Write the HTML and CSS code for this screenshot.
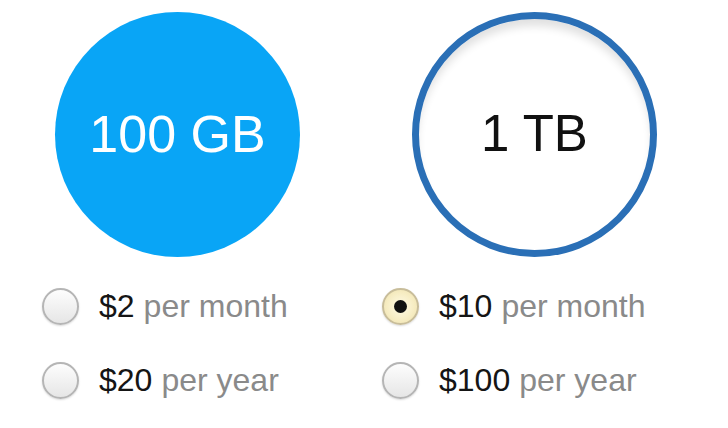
FILE: index.html
```html
<!DOCTYPE html>
<html>
<head>
<meta charset="utf-8">
<link rel="stylesheet" href="styles.css">
</head>
<body>
<div class="plans">
  <div class="circles">
    <div class="circle circle-filled">100 GB</div>
    <div class="circle circle-outline">1 TB</div>
  </div>
  <div class="options">
    <label class="option"><span class="radio"></span><span class="price">$2</span><span class="period">per month</span></label>
    <label class="option"><span class="radio radio-checked"><span class="dot"></span></span><span class="price">$10</span><span class="period">per month</span></label>
    <label class="option"><span class="radio"></span><span class="price">$20</span><span class="period">per year</span></label>
    <label class="option"><span class="radio"></span><span class="price">$100</span><span class="period">per year</span></label>
  </div>
</div>
</body>
</html>
```
FILE: styles.css
```css
html, body {
  margin: 0;
  padding: 0;
  background: #ffffff;
}
body {
  font-family: "Liberation Sans", Arial, sans-serif;
  width: 728px;
  height: 428px;
  overflow: hidden;
}
.plans {
  display: flex;
  flex-direction: column;
}
.circles {
  display: flex;
  gap: 112px;
  padding-left: 55px;
  margin-top: 12px;
}
.circle {
  width: 245px;
  height: 245px;
  border-radius: 50%;
  box-sizing: border-box;
  display: flex;
  align-items: center;
  justify-content: center;
  font-size: 52px;
  padding-bottom: 2px;
}
.circle-filled {
  background: #09a5f6;
  color: #ffffff;
}
.circle-outline {
  border: 7px solid #2a6fb6;
  background: #ffffff;
  color: #111111;
  font-size: 51px;
  box-shadow: inset 0 9px 8px -2px rgba(0, 0, 0, 0.12);
}
.options {
  display: grid;
  grid-template-columns: 340px 340px;
  row-gap: 24px;
  padding-left: 42px;
  margin-top: 24px;
}
.option {
  display: flex;
  align-items: center;
  height: 50px;
  font-size: 32px;
}
.radio {
  width: 37px;
  height: 37px;
  box-sizing: border-box;
  border-radius: 50%;
  border: 2px solid #b5b5b5;
  background: linear-gradient(#fdfdfd, #e6e6e6);
  box-shadow: 0 1px 2px rgba(0, 0, 0, 0.15);
  margin-right: 20px;
  display: flex;
  align-items: center;
  justify-content: center;
  flex-shrink: 0;
}
.radio-checked {
  border-color: #c8bd9a;
  background: radial-gradient(circle, #fffbe6 0%, #f6ecc2 60%, #ecdfa8 100%);
}
.dot {
  width: 13px;
  height: 13px;
  border-radius: 50%;
  background: #111111;
}
.price {
  color: #151515;
  margin-right: 9px;
}
.period {
  color: #8a8a8a;
}
```
